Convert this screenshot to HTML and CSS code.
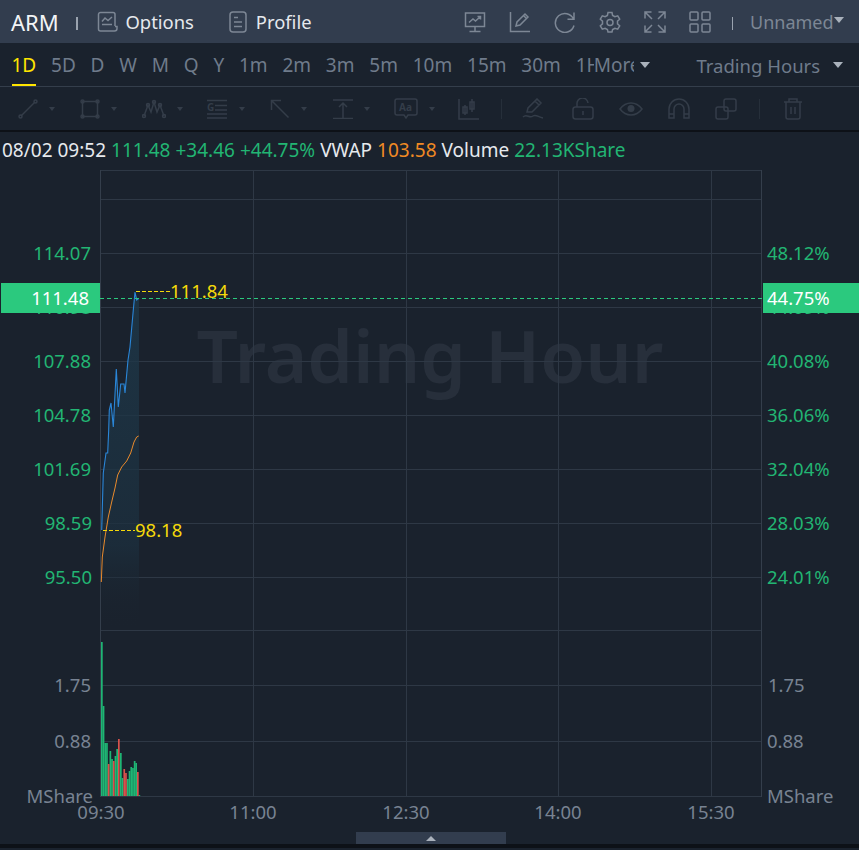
FILE: index.html
```html
<!DOCTYPE html>
<html lang="en">
<head>
<meta charset="utf-8">
<title>ARM</title>
<link rel="stylesheet" href="styles.css">
</head>
<body>
<div class="app">
  <header class="topbar">
    <span class="symbol">ARM</span>
    <span class="pipe"></span>
    <a class="toplink options">
      <svg class="ico" width="22" height="22" viewBox="0 0 22 22"><path d="M18 15V3.500A2 2 0 0 0 16 1.500H3.500A2 2 0 0 0 1.500 3.500V18A2 2 0 0 0 3.500 20H17.500A2.500 2.500 0 0 0 20 17.500V15.500H18"/><path d="M5 10.500L8 7L11 9.500L15 6M5 13.500H15"/></svg>
      <span>Options</span>
    </a>
    <a class="toplink profile">
      <svg class="ico" width="18" height="22" viewBox="0 0 18 22"><rect x="1" y="1" width="16" height="20" rx="3"/><path d="M5 6.500H9M5 11H13M5 15.500H13"/></svg>
      <span>Profile</span>
    </a>
    <div class="topicons">
      <svg class="ico" width="22" height="22" viewBox="0 0 22 22"><path d="M1.500 2H20.500V15.500H1.500ZM11 15.500V20.500M5.500 20.500H16.500M5 11.500L9 8L11.500 10L16.500 5.500M13.500 5.500H16.500V8.500"/></svg>
      <svg class="ico" width="22" height="22" viewBox="0 0 22 22"><path d="M1.500 1V20.500H21M7 15L8 11L16 3L19 6L11 14ZM14.500 4.500L17.500 7.500"/></svg>
      <svg class="ico" width="22" height="22" viewBox="0 0 22 22"><path d="M19.500 8A9.500 9.500 0 1 0 20 14.500M20 1.500V8.200H13.500" /></svg>
      <svg class="ico" width="22" height="22" viewBox="0 0 22 22"><path d="M9 1.500H13L13.600 4.400L15.900 5.700L18.700 4.800L20.700 8.200L18.500 10.200V12.800L20.700 14.800L18.700 18.200L15.900 17.300L13.600 18.600L13 21H9L8.400 18.600L6.100 17.300L3.300 18.200L1.300 14.800L3.500 12.800V10.200L1.300 8.200L3.300 4.800L6.100 5.700L8.400 4.400Z"/><circle cx="11" cy="11.500" r="3"/></svg>
      <svg class="ico" width="22" height="22" viewBox="0 0 22 22"><path d="M1 7.500V1H7.500M1 1L8 8M21 7.500V1H14.500M21 1L14 8M1 14.500V21H7.500M1 21L8 14M21 14.500V21H14.500M21 21L14 14"/></svg>
      <svg class="ico" width="22" height="22" viewBox="0 0 22 22"><rect x="1" y="1" width="8" height="8" rx="1"/><rect x="13" y="1" width="8" height="8" rx="1"/><rect x="1" y="13" width="8" height="8" rx="1"/><rect x="13" y="13" width="8" height="8" rx="1"/></svg>
    </div>
    <span class="pipe pipe-right"></span>
    <span class="layout-name">Unnamed</span>
    <span class="caret caret-light"></span>
  </header>

  <nav class="periods">
    <a class="period active">1D</a>
    <a class="period">5D</a>
    <a class="period">D</a>
    <a class="period">W</a>
    <a class="period">M</a>
    <a class="period">Q</a>
    <a class="period">Y</a>
    <a class="period">1m</a>
    <a class="period">2m</a>
    <a class="period">3m</a>
    <a class="period">5m</a>
    <a class="period">10m</a>
    <a class="period">15m</a>
    <a class="period">30m</a>
    <a class="period cut">1H</a>
    <a class="more"><span class="more-text">More</span><span class="caret caret-light"></span></a>
    <a class="session"><span>Trading Hours</span><span class="caret caret-light"></span></a>
  </nav>

  <div class="tools">
    <svg class="tool t-line" width="20" height="20" viewBox="0 0 20 20"><path d="M3 17L17 3"/><circle cx="2.500" cy="17.500" r="1.500"/><circle cx="17.500" cy="2.500" r="1.500"/></svg><span class="mini"></span>
    <svg class="tool t-rect" width="20" height="20" viewBox="0 0 20 20"><path d="M2.500 2.500H17.500V17.500H2.500Z"/><circle cx="2.500" cy="2.500" r="1.500"/><circle cx="17.500" cy="2.500" r="1.500"/><circle cx="2.500" cy="17.500" r="1.500"/><circle cx="17.500" cy="17.500" r="1.500"/></svg><span class="mini"></span>
    <svg class="tool t-wave" width="24" height="20" viewBox="0 0 24 20"><path d="M2 17L6 6L9 13L12 3L15 13L18 6L22 17"/><circle cx="2" cy="17" r="1.500"/><circle cx="6" cy="6" r="1.500"/><circle cx="12" cy="3" r="1.500"/><circle cx="18" cy="6" r="1.500"/><circle cx="22" cy="17" r="1.500"/></svg><span class="mini"></span>
    <svg class="tool t-fib" width="22" height="20" viewBox="0 0 22 20"><path d="M1 1.500H21M9 6.500H21M9 11H21M1 15H21M1 19H21"/><text class="tool-letter" x="1" y="12">G</text></svg><span class="mini"></span>
    <svg class="tool t-arrow" width="20" height="20" viewBox="0 0 20 20"><path d="M1.500 1.500L18.500 18.500M1.500 11V1.500H11"/></svg><span class="mini"></span>
    <svg class="tool t-range" width="20" height="20" viewBox="0 0 20 20"><path d="M0 1H20M0 19.500H20M10 5V19.500M6 8L10 4L14 8"/></svg><span class="mini"></span>
    <svg class="tool t-text" width="24" height="22" viewBox="0 0 24 22"><path d="M3 1H21A2 2 0 0 1 23 3V15A2 2 0 0 1 21 17H14L12 20L10 17H3A2 2 0 0 1 1 15V3A2 2 0 0 1 3 1Z"/><text class="tool-letter" x="5" y="13">Aa</text></svg><span class="mini"></span>
    <svg class="tool t-candle" width="22" height="22" viewBox="0 0 22 22"><path d="M1 1V21H21M7 7V17M14 1V14"/><rect x="5" y="9" width="4" height="6"/><rect x="12" y="4" width="4" height="7"/></svg>
    <span class="toolsep"></span>
    <svg class="tool t-pen" width="22" height="22" viewBox="0 0 22 22"><path d="M5 14L6 10L15 1L19 5L10 14ZM13 3L17 7M1 19C5 15 7 21 11 18C14 16 16 19 21 20"/></svg>
    <svg class="tool t-lock" width="22" height="22" viewBox="0 0 22 22"><rect x="1" y="9" width="20" height="12" rx="2.500"/><path d="M5 9V6A5.500 5.500 0 0 1 16 5M11 13V17"/></svg>
    <svg class="tool t-eye" width="24" height="16" viewBox="0 0 24 16"><path d="M1 8C7 0 17 0 23 8C17 16 7 16 1 8Z"/><circle class="solid" cx="12" cy="7.500" r="3.500"/></svg>
    <svg class="tool t-magnet" width="22" height="22" viewBox="0 0 22 22"><path d="M1 20V11A10 10 0 0 1 21 11V20H16V11A5 5 0 0 0 6 11V20ZM1 16H6M16 16H21"/></svg>
    <svg class="tool t-copy" width="22" height="22" viewBox="0 0 22 22"><rect x="1" y="9" width="12" height="12" rx="2"/><rect x="9" y="1" width="12" height="12" rx="2"/></svg>
    <span class="toolsep sep2"></span>
    <svg class="tool t-trash" width="20" height="22" viewBox="0 0 20 22"><path d="M1 4H19M6 4V1H14V4M3 4V19A2 2 0 0 0 5 21H15A2 2 0 0 0 17 19V4M8 9V16M12 9V16"/></svg>
  </div>

  <div class="quote">
    <span class="q-white">08/02 09:52</span>
    <span class="q-green">111.48</span>
    <span class="q-green">+34.46</span>
    <span class="q-green">+44.75%</span>
    <span class="q-white">VWAP</span>
    <span class="q-orange">103.58</span>
    <span class="q-white">Volume</span>
    <span class="q-green">22.13KShare</span>
  </div>

  <svg class="chart" width="859" height="662" viewBox="0 170 859 662">
    <defs>
      <linearGradient id="area" x1="0" y1="0" x2="0" y2="1">
        <stop offset="0" stop-color="#1e3a4c" stop-opacity=".75"/>
        <stop offset=".75" stop-color="#1c2f3e" stop-opacity=".75"/>
        <stop offset="1" stop-color="#1a222d" stop-opacity="0"/>
      </linearGradient>
    </defs>
    <text class="watermark" x="430" y="383">Trading Hour</text>
    <path class="grid" d="M100 170.500H761M100 199.500H761M100 253.500H761M100 307.500H761M100 361.500H761M100 415.500H761M100 469.500H761M100 523.500H761M100 577.500H761M100 630.500H761M100 685.500H761M100 741.500H761M100 796.500H761M253.500 170V796M406.500 170V796M558.500 170V796M711.500 170V796"/>
    <path class="frame" d="M100.500 170V797M761.500 170V797"/>

    <path fill="url(#area)" d="M101.700 530L103.300 473L106 453L107.700 453L108.700 430L109.300 410L111 403L113.300 427L116.300 369L118.300 407L120.700 384L124 384L125 393L128 360L130 347L133.300 310L135 292L136.700 300L139 298V630H101.700Z"/>
    <polyline class="price" points="101.700,530 103.300,473 106,453 107.700,453 108.700,430 109.300,410 111,403 113.300,427 116.300,369 118.300,407 120.700,384 124,384 125,393 128,360 130,347 133.300,310 135,292 136.700,300 138.500,298.500"/>
    <polyline class="vwap" points="101.300,582 102.300,557 105,537 108.300,517 111.700,502 115,488 117.700,475 121.700,467 126.700,461 130.700,453 134,442 136.700,437 138.700,436"/>

    <g class="up">
      <rect x="101" y="642" width="1.700" height="154"/><rect x="102.700" y="706" width="1.700" height="90"/><rect x="104.400" y="743" width="1.700" height="53"/><rect x="106.100" y="743" width="1.700" height="53"/>
      <rect x="109.500" y="751" width="1.700" height="45"/><rect x="111.200" y="759" width="1.700" height="37"/><rect x="114.600" y="756" width="1.700" height="40"/><rect x="116.300" y="749" width="1.700" height="47"/>
      <rect x="120" y="753" width="1.700" height="43"/><rect x="121.700" y="778" width="1.700" height="18"/><rect x="127" y="779" width="1.700" height="17"/><rect x="128.700" y="771" width="1.700" height="25"/>
      <rect x="130.400" y="767" width="1.700" height="29"/><rect x="132.100" y="768" width="1.700" height="28"/><rect x="133.800" y="761" width="1.700" height="35"/><rect x="135.300" y="763" width="1.700" height="33"/><rect x="138.500" y="795" width="1.700" height="1"/>
    </g>
    <g class="down">
      <rect x="107.800" y="764" width="1.700" height="32"/><rect x="112.900" y="761" width="1.700" height="35"/><rect x="118" y="739" width="1.700" height="57"/><rect x="123.400" y="769" width="1.700" height="27"/><rect x="125.100" y="773" width="1.700" height="23"/><rect x="137" y="772" width="1.700" height="24"/>
    </g>

    <text class="axis up-text left" x="91" y="253">114.07</text>
    <text class="axis up-text left" x="91" y="307">110.98</text>
    <text class="axis up-text left" x="91" y="361">107.88</text>
    <text class="axis up-text left" x="91" y="415">104.78</text>
    <text class="axis up-text left" x="91" y="469">101.69</text>
    <text class="axis up-text left" x="92" y="523">98.59</text>
    <text class="axis up-text left" x="92" y="577">95.50</text>
    <text class="axis up-text" x="767" y="253">48.12%</text>
    <text class="axis up-text" x="767" y="307">44.09%</text>
    <text class="axis up-text" x="767" y="361">40.08%</text>
    <text class="axis up-text" x="767" y="415">36.06%</text>
    <text class="axis up-text" x="767" y="469">32.04%</text>
    <text class="axis up-text" x="767" y="523">28.03%</text>
    <text class="axis up-text" x="767" y="577">24.01%</text>

    <text class="axis grey left" x="91" y="685">1.75</text>
    <text class="axis grey left" x="91" y="741">0.88</text>
    <text class="axis grey left" x="93" y="796">MShare</text>
    <text class="axis grey" x="768" y="685">1.75</text>
    <text class="axis grey" x="767" y="741">0.88</text>
    <text class="axis grey" x="767" y="796">MShare</text>

    <text class="axis grey mid" x="101" y="812">09:30</text>
    <text class="axis grey mid" x="253" y="812">11:00</text>
    <text class="axis grey mid" x="406" y="812">12:30</text>
    <text class="axis grey mid" x="558" y="812">14:00</text>
    <text class="axis grey mid" x="711" y="812">15:30</text>

    <path class="leader" d="M136 291.500H170M103 530.500H135"/>
    <text class="axis yellow" x="170" y="291">111.84</text>
    <text class="axis yellow" x="135" y="530">98.18</text>

    <path class="lastline" d="M100 298.500H763"/>
    <rect class="tag" x="1" y="283" width="99" height="30"/>
    <rect class="tag" x="763" y="283" width="96" height="30"/>
    <text class="axis white left" x="89" y="298">111.48</text>
    <text class="axis white" x="767" y="298">44.75%</text>
  </svg>

  <div class="scroller-row">
    <div class="scroller"><span class="scroller-caret"></span></div>
  </div>
  <div class="footer-line"></div>
</div>
</body>
</html>
```
FILE: styles.css
```css
* { box-sizing: border-box; }
html, body { margin: 0; padding: 0; background: #1a222d; }
body { font-family: "Noto Sans", "Open Sans", sans-serif; overflow: hidden; }
.app { width: 859px; height: 850px; display: flex; flex-direction: column; background: #1a222d; }

.ico { fill: none; stroke: #7d8795; stroke-width: 1.5; flex: none; display: block; }

.topbar { height: 43px; background: #323d4e; display: flex; align-items: center; padding-left: 11px; flex: none; }
.symbol { font-size: 22px; color: #f2f4f6; width: 65px; }
.pipe { width: 1.500px; height: 13px; background: #9aa3af; flex: none; margin-top: 3px; }
.toplink { display: flex; align-items: center; font-size: 18.400px; color: #e6e9ed; }
.toplink.options { margin-left: 19px; gap: 7px; }
.toplink.profile { margin-left: 35px; gap: 9px; }
.topicons { display: flex; gap: 23px; margin-left: 152px; }
.pipe-right { margin-left: 21px; }
.layout-name { margin-left: 17px; font-size: 18px; color: #7d8795; }
.caret { width: 0; height: 0; border-style: solid; border-width: 6px 5px 0; border-color: #aab2bc transparent transparent; flex: none; }
.topbar .caret { margin-left: 0; margin-bottom: 4px; }

.periods { height: 44px; flex: none; background: #1a222d; border-bottom: 1px solid #343e4b; display: flex; align-items: stretch; padding-left: 11.500px; gap: 14.800px; }
.period { font-size: 19px; color: #6f7b8b; line-height: 44px; height: 43px; flex: none; }
.period.active { color: #ffe500; border-bottom: 2px solid #ffe500; }
.period.cut { width: 18px; overflow: hidden; }
.more { display: flex; align-items: center; margin-left: -14.800px; gap: 6px; font-size: 19px; color: #6f7b8b; background: #1a222d; flex: none; padding-top: 1px; }
.more-text { width: 40px; overflow: hidden; white-space: nowrap; }
.session { display: flex; align-items: center; margin-left: 32px; gap: 13px; font-size: 18.500px; color: #6f7b8b; flex: none; padding-top: 1px; }

.tools { height: 43px; flex: none; display: flex; align-items: center; background: #1a222d; padding-left: 18px; }
.tool { fill: none; stroke: #343d49; stroke-width: 1.500; flex: none; display: block; }
.tool .solid { fill: #343d49; stroke: none; }
.tool-letter { font-size: 10px; font-weight: 700; fill: #343d49; stroke: none; font-family: "Noto Sans", sans-serif; }
.mini { width: 0; height: 0; border-style: solid; border-width: 4px 3px 0; border-color: #343d49 transparent transparent; flex: none; margin-left: 11px; }
.t-rect { margin-left: 25px; }
.t-wave { margin-left: 25px; }
.t-fib { margin-left: 23px; }
.t-arrow { margin-left: 25px; }
.t-range { margin-left: 26px; }
.t-text { margin-left: 24px; }
.t-candle { margin-left: 23px; }
.toolsep { width: 1px; height: 20px; background: #262f3a; margin-left: 21px; flex: none; }
.t-pen { margin-left: 20px; }
.t-lock { margin-left: 28px; }
.t-eye { margin-left: 25px; }
.t-magnet { margin-left: 25px; }
.t-copy { margin-left: 25px; }
.sep2 { margin-left: 22px; }
.t-trash { margin-left: 23px; }

.quote { height: 40px; flex: none; border-top: 2px solid #0d1117; background: #1a222d; padding: 0 0 2px 2px; display: flex; align-items: center; gap: 5px; font-size: 19px; white-space: nowrap; }
.q-white { color: #e6e9ed; }
.q-green { color: #22b573; }
.q-orange { color: #f08a24; }

.chart { display: block; flex: none; }
.watermark { font-size: 73px; font-weight: 600; fill: #272f3b; text-anchor: middle; }
.grid { fill: none; stroke: #2e3845; stroke-width: 1; }
.frame { fill: none; stroke: #343e4b; stroke-width: 1; }
.price { fill: none; stroke: #2a86d8; stroke-width: 1.100; }
.vwap { fill: none; stroke: #e98a2c; stroke-width: 1; }
.up { fill: #1fb574; }
.down { fill: #d8524c; }
.axis { font-size: 18.500px; dominant-baseline: central; transform: translateY(-1px); }
.left { text-anchor: end; }
.mid { text-anchor: middle; }
.up-text { fill: #22b573; }
.grey { fill: #788392; }
.yellow { fill: #f5d90a; }
.white { fill: #ffffff; }
.leader { fill: none; stroke: #f5d90a; stroke-width: 1; stroke-dasharray: 4 2; }
.lastline { fill: none; stroke: #2bc97e; stroke-width: 1; stroke-dasharray: 4 3; }
.tag { fill: #2bc97e; }

.scroller-row { height: 12px; flex: none; display: flex; justify-content: center; }
.scroller { width: 150px; height: 12px; margin-left: 2px; background: #323d4e; display: flex; align-items: center; justify-content: center; }
.scroller-caret { width: 0; height: 0; border-style: solid; border-width: 0 5px 5px; border-color: transparent transparent #aab2bc; }
.footer-line { height: 4px; flex: none; background: #0d1117; }
```
